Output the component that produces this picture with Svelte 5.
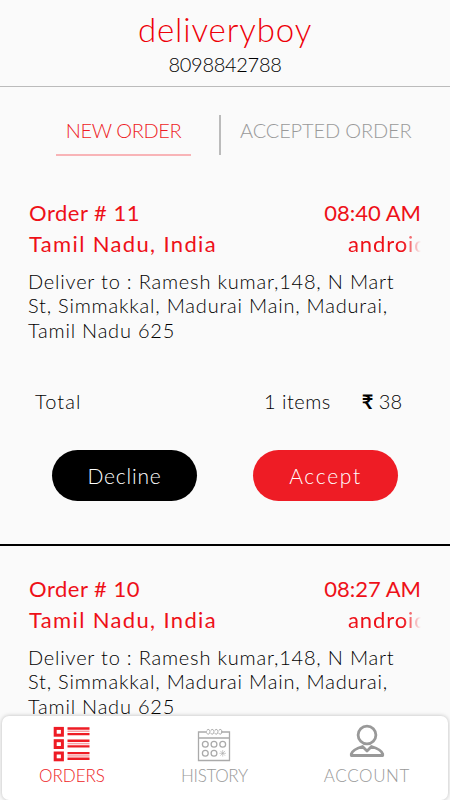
<script lang="ts">
	interface Order {
		id: number;
		time: string;
		place: string;
		source: string;
		address: string[];
		items: number;
		total: number;
	}

	const address = [
		'Deliver to : Ramesh kumar,148, N Mart',
		'St, Simmakkal, Madurai Main, Madurai,',
		'Tamil Nadu 625'
	];

	const orders: Order[] = [
		{ id: 11, time: '08:40 AM', place: 'Tamil Nadu, India', source: 'android', address, items: 1, total: 38 },
		{ id: 10, time: '08:27 AM', place: 'Tamil Nadu, India', source: 'android', address, items: 1, total: 38 }
	];

	let tab = $state('new');
</script>

<div class="screen">
	<header class="header">
		<h1 class="header__name">deliveryboy</h1>
		<p class="header__phone">8098842788</p>
	</header>

	<div class="tabs">
		<button class="tab tab--new" class:tab--active={tab === 'new'} onclick={() => (tab = 'new')}>NEW ORDER</button>
		<div class="tabs__divider"></div>
		<button class="tab" class:tab--active={tab === 'accepted'} onclick={() => (tab = 'accepted')}>ACCEPTED ORDER</button>
	</div>

	<main class="orders">
		{#each orders as order (order.id)}
			<article class="order">
				<div class="order__row">
					<span class="order__id">Order # {order.id}</span>
					<span class="order__time">{order.time}</span>
				</div>
				<div class="order__row">
					<span class="order__place">{order.place}</span>
					<span class="order__source">{order.source}</span>
				</div>
				<div class="order__address">
					{#each order.address as line}
						<div>{line}</div>
					{/each}
				</div>
				<div class="order__total">
					<span class="order__label">Total</span>
					<span class="order__items">{order.items} items</span>
					<span class="order__price"><b>₹</b> {order.total}</span>
				</div>
				<div class="order__actions">
					<button class="btn btn--decline">Decline</button>
					<button class="btn btn--accept">Accept</button>
				</div>
			</article>
		{/each}
	</main>

	<nav class="nav">
		<a class="nav__item nav__item--active" href="#orders">
			<svg width="38" height="38" viewBox="0 0 38 38">
				{#each [2.2, 14.5, 26.8] as y}
					<rect x="2.2" y={y + 2.2} width="7.2" height="6.8" fill="#fff" stroke="#ee1c25" stroke-width="3" />
					<path d="M14.5 {y + 2.3}h22M14.5 {y + 7.9}h22" stroke="#ee1c25" stroke-width="2.4" />
					<path d="M14.5 {y + 5.1}h22" stroke="#f7a0a5" stroke-width="1.5" />
				{/each}
			</svg>
			<span>ORDERS</span>
		</a>
		<a class="nav__item nav__item--history" href="#history">
			<svg width="34" height="38" viewBox="0 0 34 38" fill="none" stroke="#aaa" stroke-width="1.3">
				<path d="M10 8H1.5v28.5h31V8H24M1.5 14h31" />
				{#each [11, 15, 19, 23] as x}
					<path d="M{x - 1} 6.5c0-1.6 3-1.6 3 1.2s-3 3.2-3 1.4" stroke-width="1" />
				{/each}
				<circle cx="8.3" cy="20.3" r="2.9" />
				<circle cx="17" cy="20.3" r="2.9" />
				<circle cx="25.7" cy="20.3" r="2.9" />
				<circle cx="8.3" cy="29.3" r="2.9" />
				<circle cx="17" cy="29.3" r="2.9" />
				<path d="M25.7 26v6.6M22.4 29.3H29M23.3 26.9l4.8 4.8M28.1 26.9l-4.8 4.8" stroke-width="0.6" />
			</svg>
			<span>HISTORY</span>
		</a>
		<a class="nav__item nav__item--account" href="#account">
			<svg width="36" height="38" viewBox="0 0 36 38" fill="none" stroke="#999" stroke-width="2.8" stroke-linejoin="round">
				<circle cx="18" cy="11" r="8.9" />
				<path d="M2.300 31.500V30c1-3.500 6.700-6.200 11.200-7.500l4.500 4.500 4.500-4.500C27 23.800 32.700 26.500 33.700 30v1.500z" />
			</svg>
			<span>ACCOUNT</span>
		</a>
	</nav>
</div>

<style>
	:global(body) {
		background: #fafafa;
	}

	.screen {
		display: flex;
		flex-direction: column;
		height: 800px;
		overflow: hidden;
		background: #fafafa;
		color: #000;
		font-family: 'Lato', 'Open Sans', sans-serif;
		font-weight: 300;
		white-space: nowrap;
	}

	button {
		padding: 0;
		border: 0;
		background: none;
		font: inherit;
	}

	/* Courier name and phone */
	.header {
		flex: none;
		box-sizing: border-box;
		height: 87px;
		padding-top: 9px;
		border-bottom: 1px solid #bbb;
		text-align: center;
	}

	.header__name {
		margin: 0;
		font-size: 33px;
		font-weight: 300;
		line-height: 40px;
		letter-spacing: 0.9px;
		color: #ee0008;
	}

	.header__phone {
		margin: 0;
		font-size: 20px;
		line-height: 30px;
		letter-spacing: -0.3px;
	}

	/* Tabs */
	.tabs {
		flex: none;
		display: flex;
		height: 69px;
		padding: 28px 0 0 56px;
		box-sizing: border-box;
	}

	.tab {
		box-sizing: border-box;
		height: 41px;
		padding-bottom: 12px;
		font-size: 20px;
		letter-spacing: -0.15px;
		color: #999;
	}

	.tab--new {
		width: 135px;
		letter-spacing: -0.4px;
	}

	.tab--active {
		color: #ee1c25;
		box-shadow: inset 0 -2px #f8b4b7;
	}

	.tabs__divider {
		width: 2px;
		height: 40px;
		margin: 0 19px 0 28px;
		background: #bbb;
	}

	.orders {
		flex: 1;
		min-height: 0;
		overflow: hidden;
	}

	.order {
		box-sizing: border-box;
		height: 376px;
		padding: 27px 29px 0;
	}

	.order:first-child {
		height: 390px;
		padding-top: 41px;
		border-bottom: 2px solid #000;
	}

	.order__row {
		display: flex;
		justify-content: space-between;
		height: 31px;
		font-size: 22px;
		font-weight: 400;
		line-height: 31px;
		color: #ee1018;
	}

	.order__id {
		letter-spacing: 0.5px;
	}

	.order__place {
		letter-spacing: 1.35px;
	}

	.order__source {
		width: 73px;
		overflow: hidden;
		letter-spacing: 0.9px;
		mask-image: linear-gradient(to right, #000 76%, transparent);
	}

	.order__address {
		margin: 10px 0 0 -1px;
		font-size: 20px;
		line-height: 24.3px;
		letter-spacing: 0.8px;
	}

	.order__total {
		display: flex;
		height: 30px;
		margin: 44px 19px 0 6px;
		font-size: 20px;
		line-height: 30px;
	}

	.order__label {
		flex: 1;
		letter-spacing: 1.1px;
	}

	.order__items {
		letter-spacing: 0.5px;
	}

	.order__price {
		margin-left: 31px;
	}

	.order__price b {
		font-weight: 700;
	}

	.order__actions {
		display: flex;
		justify-content: space-between;
		margin: 34px 23px 0;
	}

	.btn {
		width: 145px;
		height: 51px;
		border-radius: 26px;
		font-size: 21px;
		letter-spacing: 0.8px;
		color: #fff;
	}

	.btn--decline {
		background: #000;
	}

	.btn--accept {
		background: #ee1c25;
		letter-spacing: 1.7px;
	}

	/* Bottom bar */
	.nav {
		flex: none;
		display: flex;
		justify-content: space-between;
		box-sizing: border-box;
		height: 84px;
		margin: 0 2px;
		padding: 8px 38px 0 37px;
		border-radius: 7px;
		background: #fff;
		box-shadow: 0 0 4px rgba(0, 0, 0, 0.25);
	}

	.nav__item {
		display: flex;
		flex-direction: column;
		align-items: center;
		font-size: 17px;
		line-height: 28px;
		color: #999;
		text-decoration: none;
	}

	.nav__item svg {
		display: block;
	}

	.nav__item--active {
		color: #ee1c25;
	}

	.nav__item--history {
		letter-spacing: -0.35px;
	}

	.nav__item--account {
		letter-spacing: 0.6px;
	}
</style>
